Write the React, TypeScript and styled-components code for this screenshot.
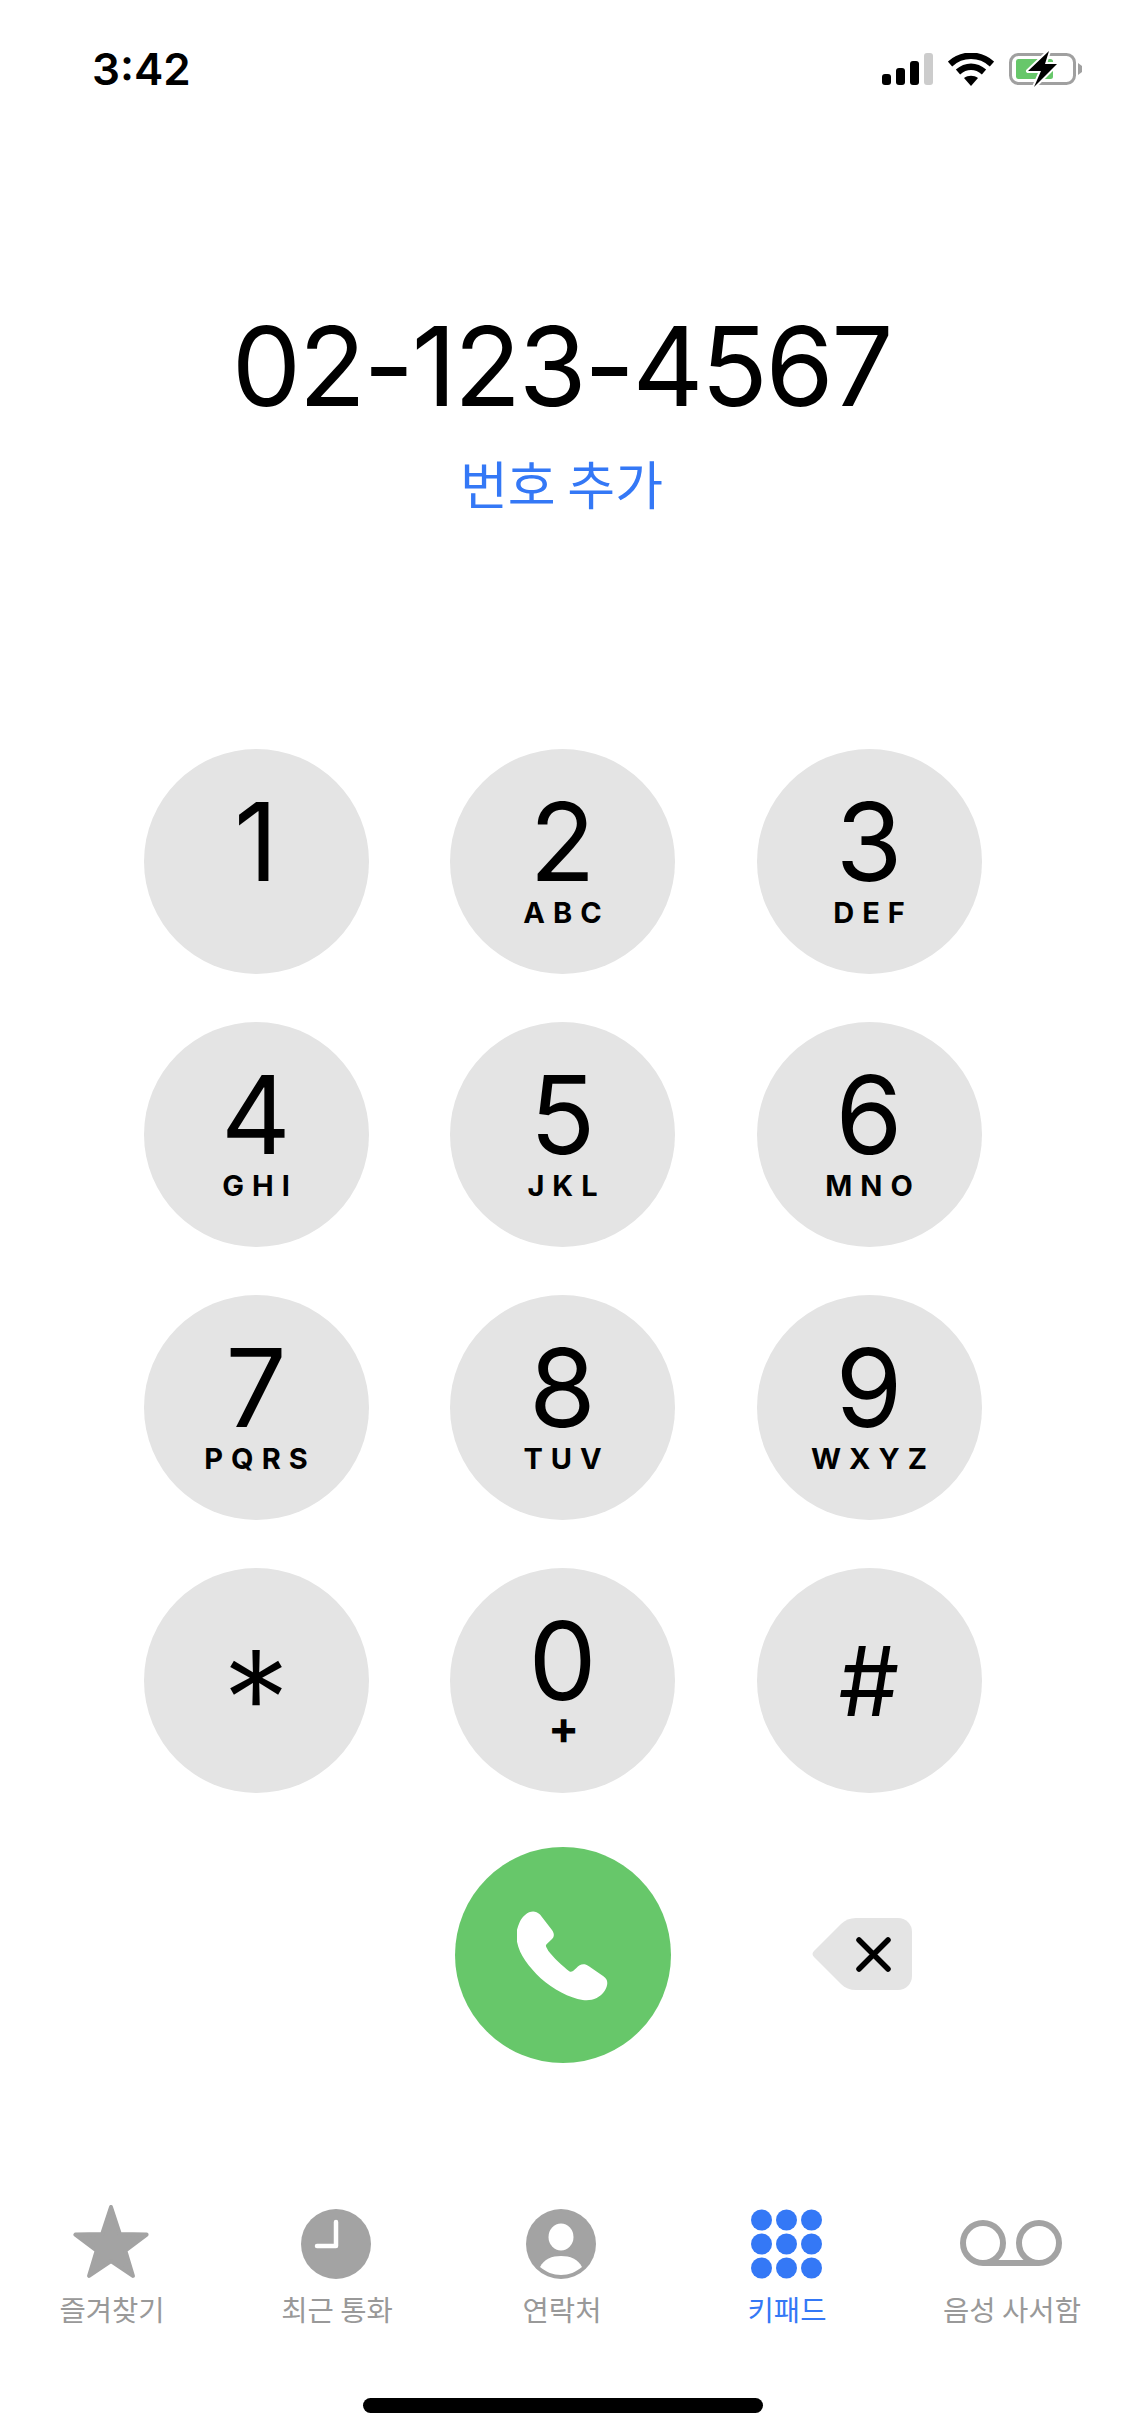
import styled, { createGlobalStyle } from "styled-components";

const GlobalStyle = createGlobalStyle`
  html, body {
    margin: 0;
    padding: 0;
    background-color: #ffffff;
  }
  * {
    box-sizing: border-box;
  }
`

const Page = styled.div`
  width: 1125px;
  height: 2436px;
  display: flex;
  flex-direction: column;
  align-items: center;
  background-color: #ffffff;
  font-family: Inter, "Noto Sans CJK KR", sans-serif;
  color: #000000;
  overflow: hidden;
`

const StatusBar = styled.div`
  width: 100%;
  height: 100px;
  padding: 43px 0 0 92px;
  display: flex;
  justify-content: space-between;
  align-items: flex-start;
`

const Time = styled.span`
  font-size: 44px;
  line-height: 52px;
  font-weight: 600;
`

const StatusIcons = styled.div`
  display: flex;
  align-items: center;
  gap: 15px;
  margin: 8px 42px 0 0;
  svg {
    display: block;
  }
`

const NumberBlock = styled.div`
  height: 649px;
  padding-top: 201px;
  display: flex;
  flex-direction: column;
  align-items: center;
`

const DialNumber = styled.div`
  margin-right: 2px;
  font-size: 110px;
  line-height: 130px;
  font-weight: 400;
  letter-spacing: -2.4px;
  white-space: nowrap;
`

const AddNumber = styled.div`
  margin-top: 19px;
  margin-right: 2px;
  font-family: "Noto Sans CJK KR", sans-serif;
  font-size: 52px;
  line-height: 66px;
  color: #3478f6;
`

const Keypad = styled.div`
  display: grid;
  grid-template-columns: repeat(3, 225px);
  column-gap: 81.5px;
  row-gap: 48px;
`

const Key = styled.div<{ $centered?: boolean }>`
  width: 225px;
  height: 225px;
  border-radius: 50%;
  background-color: #e4e4e4;
  display: flex;
  flex-direction: column;
  align-items: center;
  justify-content: ${(p) => (p.$centered ? "center" : "flex-start")};
  padding-top: ${(p) => (p.$centered ? "0" : "51px")};
`

const Digit = styled.span`
  font-size: 108px;
  line-height: 84px;
  font-weight: 400;
`

const Star = styled.span`
  font-size: 135px;
  line-height: 70px;
  height: 34px;
  font-weight: 300;
`

const Hash = styled.span`
  font-size: 96px;
  line-height: 90px;
  font-weight: 400;
`

const Letters = styled.span`
  margin-top: 12px;
  margin-right: -8px;
  font-size: 29px;
  line-height: 34px;
  font-weight: 700;
  letter-spacing: 8px;
  white-space: nowrap;
`

const Plus = styled.span`
  margin-top: 4px;
  margin-left: 2px;
  font-size: 46px;
  line-height: 40px;
  font-weight: 700;
`

const CallRow = styled.div`
  margin-top: 54px;
  display: grid;
  grid-template-columns: repeat(3, 225px);
  column-gap: 81.5px;
  align-items: center;
  justify-items: center;
`

const CallButton = styled.div`
  grid-column: 2;
  width: 216px;
  height: 216px;
  border-radius: 50%;
  background-color: #67c76a;
  display: flex;
  align-items: center;
  justify-content: center;
`

const Backspace = styled.div`
  display: flex;
  margin: 0 15px 2px 0;
  svg {
    display: block;
  }
`

const TabBar = styled.div`
  margin-top: 142px;
  width: 100%;
  display: grid;
  grid-template-columns: repeat(5, 225px);
`

const Tab = styled.div<{ $active?: boolean }>`
  display: flex;
  flex-direction: column;
  align-items: center;
  color: ${(p) => (p.$active ? "#3478f6" : "#999999")};
`

const TabIcon = styled.div`
  height: 74px;
  margin-left: -3px;
  display: flex;
  align-items: flex-end;
  justify-content: center;
  svg {
    display: block;
  }
`

const TabLabel = styled.span`
  margin-top: 12px;
  margin-left: -1px;
  font-family: "Noto Sans CJK KR", sans-serif;
  font-size: 28.6px;
  line-height: 36px;
  white-space: nowrap;
`

const HomeBar = styled.div`
  margin-top: 71px;
  width: 400px;
  height: 15px;
  border-radius: 8px;
  background-color: #000000;
`

const keys = [
  { digit: "1", letters: "" },
  { digit: "2", letters: "ABC" },
  { digit: "3", letters: "DEF" },
  { digit: "4", letters: "GHI" },
  { digit: "5", letters: "JKL" },
  { digit: "6", letters: "MNO" },
  { digit: "7", letters: "PQRS" },
  { digit: "8", letters: "TUV" },
  { digit: "9", letters: "WXYZ" },
];

function SignalIcon() {
  return (
    <svg width="51" height="32" viewBox="0 0 51 32">
      <rect x="0" y="21" width="9" height="11" rx="3" fill="#000" />
      <rect x="14" y="15" width="9" height="17" rx="3" fill="#000" />
      <rect x="28" y="8" width="9" height="24" rx="3" fill="#000" />
      <rect x="42" y="0" width="9" height="32" rx="3" fill="#cccccc" />
    </svg>
  );
}

function WifiIcon() {
  return (
    <svg width="46" height="33" viewBox="0 0 46 33">
      <path d="M2 11 C14 0 32 0 44 11" fill="none" stroke="#000" strokeWidth="6.5" />
      <path d="M10 19 C18 12 28 12 36 19" fill="none" stroke="#000" strokeWidth="6.5" />
      <path d="M16 25 C20 22 26 22 30 25 L23 33 Z" fill="#000" />
    </svg>
  );
}

function BatteryIcon() {
  return (
    <svg width="74" height="36" viewBox="0 0 74 36">
      <rect x="1.5" y="3.5" width="64" height="29" rx="8" fill="none" stroke="#a0a0a0" strokeWidth="3" />
      <path d="M69 12 L73 15 V21 L69 24 Z" fill="#a0a0a0" />
      <rect x="7" y="8" width="37" height="20" rx="2.5" fill="#67c76a" />
      <path
        d="M40 0 L19 20 H32 L25 36 L48 13 H36 Z"
        fill="#000"
        stroke="#fff"
        strokeWidth="4"
        paintOrder="stroke"
        strokeLinejoin="round"
      />
    </svg>
  );
}

function PhoneIcon() {
  return (
    <svg width="92" height="92" viewBox="290 265 280 280">
      <path
        d="M298 305 C310 280 338 260 360 282 L397 330 C405 342 403 350 395 358 L380 372 C376 376 378 380 385 392 C400 412 430 440 450 455 C456 458 460 454 470 445 C482 434 492 428 510 440 L553 470 C568 480 568 495 557 514 C542 537 515 546 490 542 C450 536 400 510 362 476 C322 436 292 400 288 350 C287 335 292 318 298 305 Z"
        fill="#ffffff"
      />
    </svg>
  );
}

function BackspaceIcon() {
  return (
    <svg width="100" height="72" viewBox="0 0 100 72">
      <path
        d="M44 0 H86 A14 14 0 0 1 100 14 V58 A14 14 0 0 1 86 72 H44 C38 72 33 70 29 66 L2 39 C0 37 0 35 2 33 L29 6 C33 2 38 0 44 0 Z"
        fill="#e4e4e4"
      />
      <path d="M47 22 L76 51 M76 22 L47 51" stroke="#000" strokeWidth="5.5" strokeLinecap="round" />
    </svg>
  );
}

function StarIcon() {
  return (
    <svg width="78" height="74" viewBox="0 0 78 74">
      <path
        d="M39 2 L47.8 28.9 L74.6 29.6 L53.3 45.6 L60.9 70.9 L39 56 L17.1 70.9 L24.7 45.6 L3.4 29.6 L30.2 28.9 Z"
        fill="#a3a3a3"
        stroke="#a3a3a3"
        strokeWidth="4"
        strokeLinejoin="round"
      />
    </svg>
  );
}

function ClockIcon() {
  return (
    <svg width="70" height="70" viewBox="0 0 70 70">
      <circle cx="35" cy="35" r="35" fill="#a3a3a3" />
      <path
        d="M35 13 V37 H16"
        fill="none"
        stroke="#ffffff"
        strokeWidth="4.5"
        strokeLinecap="round"
        strokeLinejoin="round"
      />
    </svg>
  );
}

function ContactIcon() {
  return (
    <svg width="70" height="70" viewBox="0 0 70 70">
      <circle cx="35" cy="35" r="35" fill="#a3a3a3" />
      <ellipse cx="35" cy="28" rx="12.5" ry="13.5" fill="#ffffff" />
      <path d="M14 58 C18 50 26 47 35 47 C44 47 52 50 56 58 C50 63 43 66 35 66 C27 66 20 63 14 58 Z" fill="#ffffff" />
    </svg>
  );
}

function KeypadIcon() {
  const steps = [0, 1, 2];
  return (
    <svg width="71" height="70" viewBox="0 0 71 70">
      {steps.map((row) =>
        steps.map((col) => (
          <circle key={`${row}-${col}`} cx={10.5 + col * 25} cy={11 + row * 24} r="10.5" fill="#3478f6" />
        ))
      )}
    </svg>
  );
}

function VoicemailIcon() {
  return (
    <svg width="102" height="70" viewBox="0 -11 102 70">
      <circle cx="23" cy="23" r="20" fill="none" stroke="#a3a3a3" strokeWidth="6" />
      <circle cx="79" cy="23" r="20" fill="none" stroke="#a3a3a3" strokeWidth="6" />
      <path d="M23 43 H79" stroke="#a3a3a3" strokeWidth="6" />
    </svg>
  );
}

export default function App() {
  return (
    <Page>
      <GlobalStyle />
      <StatusBar>
        <Time>3:42</Time>
        <StatusIcons>
          <SignalIcon />
          <WifiIcon />
          <BatteryIcon />
        </StatusIcons>
      </StatusBar>
      <NumberBlock>
        <DialNumber>02-123-4567</DialNumber>
        <AddNumber>번호 추가</AddNumber>
      </NumberBlock>
      <Keypad>
        {keys.map((key) => (
          <Key key={key.digit}>
            <Digit>{key.digit}</Digit>
            {key.letters && <Letters>{key.letters}</Letters>}
          </Key>
        ))}
        <Key $centered>
          <Star>*</Star>
        </Key>
        <Key>
          <Digit>0</Digit>
          <Plus>+</Plus>
        </Key>
        <Key $centered>
          <Hash>#</Hash>
        </Key>
      </Keypad>
      <CallRow>
        <CallButton>
          <PhoneIcon />
        </CallButton>
        <Backspace>
          <BackspaceIcon />
        </Backspace>
      </CallRow>
      <TabBar>
        <Tab>
          <TabIcon><StarIcon /></TabIcon>
          <TabLabel>즐겨찾기</TabLabel>
        </Tab>
        <Tab>
          <TabIcon><ClockIcon /></TabIcon>
          <TabLabel>최근 통화</TabLabel>
        </Tab>
        <Tab>
          <TabIcon><ContactIcon /></TabIcon>
          <TabLabel>연락처</TabLabel>
        </Tab>
        <Tab $active>
          <TabIcon><KeypadIcon /></TabIcon>
          <TabLabel>키패드</TabLabel>
        </Tab>
        <Tab>
          <TabIcon><VoicemailIcon /></TabIcon>
          <TabLabel>음성 사서함</TabLabel>
        </Tab>
      </TabBar>
      <HomeBar />
    </Page>
  );
}
